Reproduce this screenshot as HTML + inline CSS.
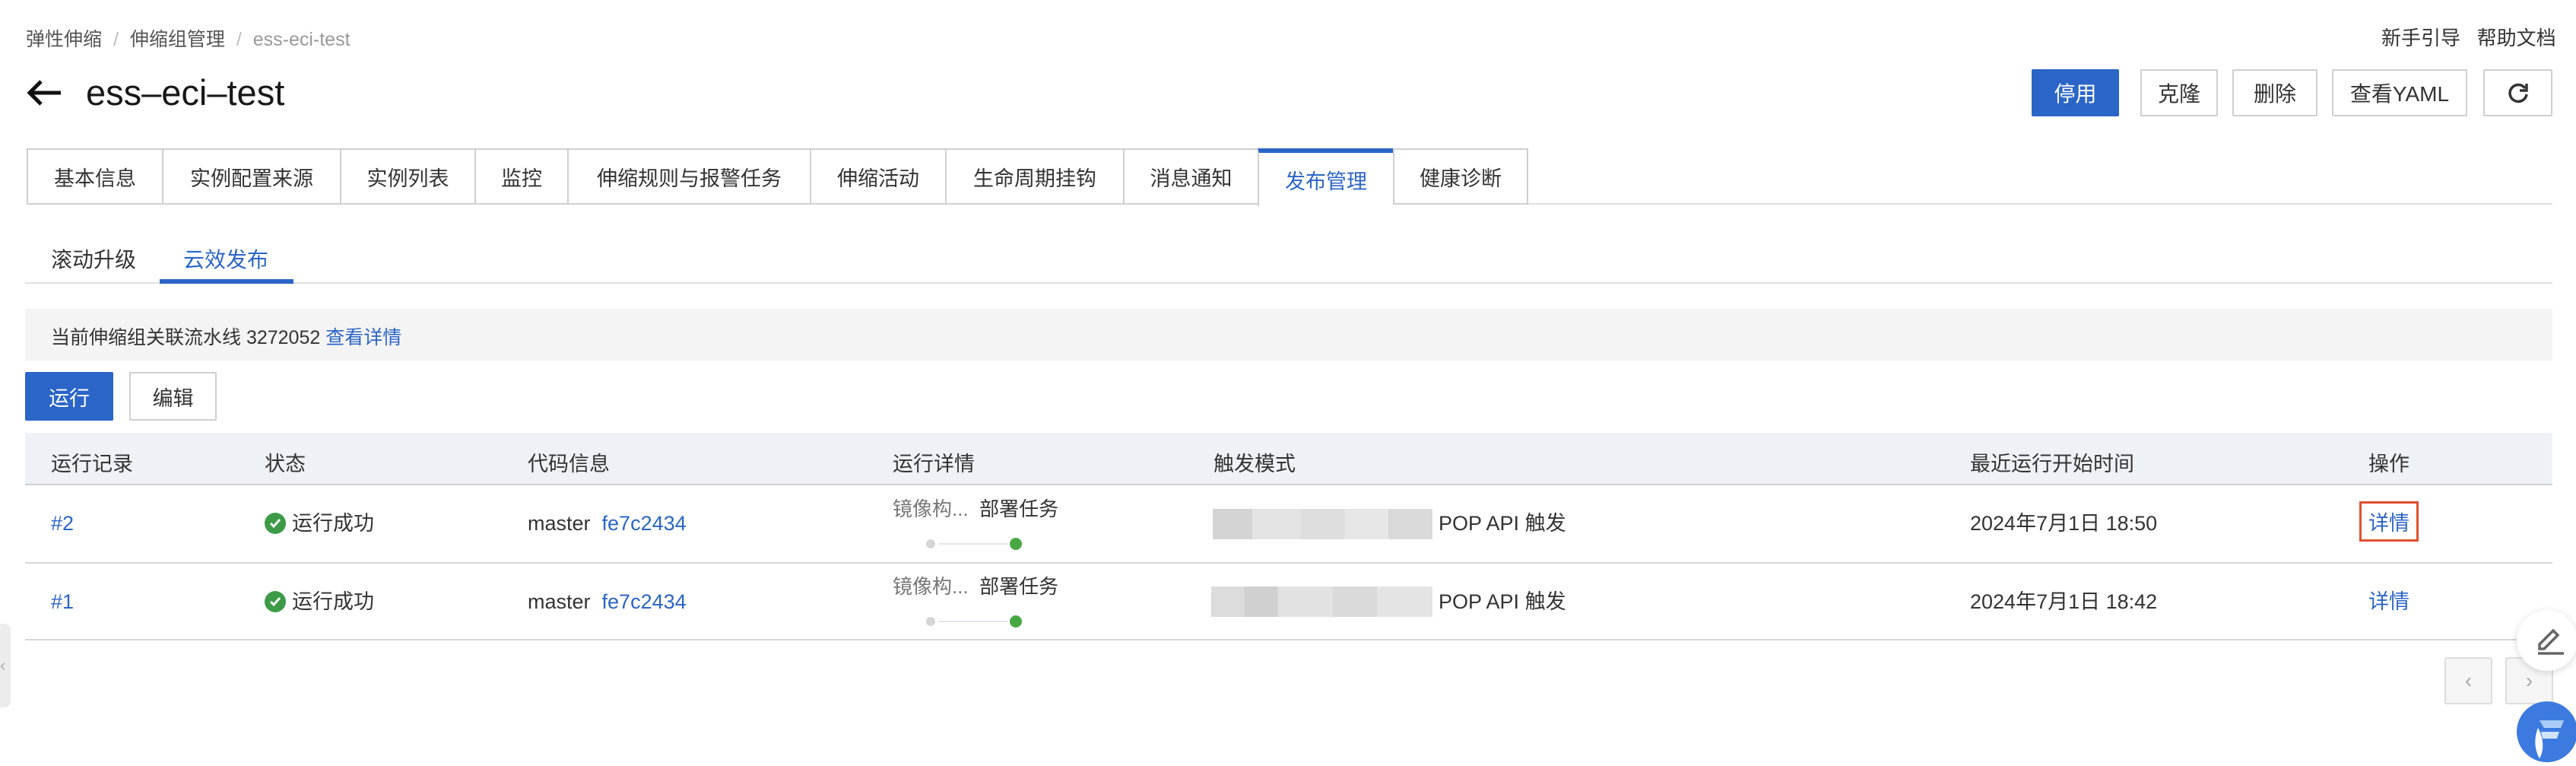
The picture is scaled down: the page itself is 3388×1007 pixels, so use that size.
<!DOCTYPE html>
<html><head><meta charset="utf-8"><style>
*{margin:0;padding:0;box-sizing:border-box}
body{width:3388px;height:996px;background:#fff;position:relative;overflow:hidden;font-family:"Liberation Sans","Noto Sans CJK SC",sans-serif;color:#333}
.a{position:absolute;white-space:nowrap}
.btn{position:absolute;top:91px;height:62px;border:2px solid #cfcfcf;background:#fff;font-size:28px;display:flex;align-items:center;justify-content:center;color:#333;border-radius:2px}
.tab{position:absolute;top:195px;height:74px;border:2px solid #cfcfcf;border-right:none;font-size:27px;display:flex;align-items:center;justify-content:center;color:#333;background:#fff}
.th{position:absolute;top:588px;font-size:27px;color:#333}
.td{position:absolute;font-size:27px;color:#333;line-height:34px}
.blue,.td.blue{color:#2b65c8}
</style></head><body>
<div class="a" style="left:34px;top:32px;font-size:25px;color:#555">弹性伸缩 <span style="color:#bbb;margin:0 8px">/</span> 伸缩组管理 <span style="color:#bbb;margin:0 8px">/</span> <span style="color:#999">ess-eci-test</span></div>
<div class="a" style="left:3132px;top:30px;font-size:26px;color:#333">新手引导&nbsp;&nbsp;&nbsp;帮助文档</div>
<svg class="a" style="left:34px;top:103px" width="48" height="38" viewBox="0 0 48 38"><path d="M46 19H6M20 4 5 19l15 15" fill="none" stroke="#111" stroke-width="5"/></svg>
<div class="a" style="left:113px;top:94px;font-size:47px;color:#181818">ess–eci–test</div>
<div class="btn" style="left:2672px;width:115px;background:#2b65c8;border-color:#2b65c8;color:#fff">停用</div>
<div class="btn" style="left:2815px;width:102px">克隆</div>
<div class="btn" style="left:2936px;width:112px">删除</div>
<div class="btn" style="left:3067px;width:178px">查看YAML</div>
<div class="btn" style="left:3266px;width:91px"><svg width="30" height="30" viewBox="0 0 30 30"><path d="M24 9A11 11 0 1 0 26 17" fill="none" stroke="#333" stroke-width="3.5"/><path d="M26 3v9h-9" fill="none" stroke="#333" stroke-width="3.5"/></svg></div>
<div class="a" style="left:35px;top:267px;width:3322px;height:2px;background:#e0e0e0"></div>
<div class="tab" style="left:35px;width:178px">基本信息</div>
<div class="tab" style="left:213px;width:234px">实例配置来源</div>
<div class="tab" style="left:447px;width:177px">实例列表</div>
<div class="tab" style="left:624px;width:122px">监控</div>
<div class="tab" style="left:746px;width:319px">伸缩规则与报警任务</div>
<div class="tab" style="left:1065px;width:178px">伸缩活动</div>
<div class="tab" style="left:1243px;width:234px">生命周期挂钩</div>
<div class="tab" style="left:1477px;width:177px">消息通知</div>
<div class="tab" style="left:1654px;width:178px;border-top:6px solid #2b65c8;border-bottom:none;height:76px;color:#2b65c8">发布管理</div>
<div class="tab" style="left:1832px;width:178px;border-right:2px solid #cfcfcf">健康诊断</div>
<div class="a" style="left:67px;top:320px;font-size:28px;color:#333">滚动升级</div>
<div class="a" style="left:241px;top:320px;font-size:28px;color:#2b65c8">云效发布</div>
<div class="a" style="left:33px;top:371px;width:3324px;height:2px;background:#e0e0e0"></div>
<div class="a" style="left:210px;top:367px;width:176px;height:6px;background:#2b65c8"></div>
<div class="a" style="left:33px;top:406px;width:3324px;height:68px;background:#f4f4f4"></div>
<div class="a" style="left:67px;top:424px;font-size:25px;color:#333">当前伸缩组关联流水线 3272052 <span class="blue">查看详情</span></div>
<div class="a" style="left:33px;top:489px;width:116px;height:64px;background:#2b65c8;border-radius:2px;color:#fff;font-size:27px;display:flex;align-items:center;justify-content:center">运行</div>
<div class="a" style="left:170px;top:489px;width:115px;height:64px;border:2px solid #cfcfcf;border-radius:2px;font-size:27px;display:flex;align-items:center;justify-content:center">编辑</div>
<div class="a" style="left:33px;top:569px;width:3324px;height:69px;background:#eef1f6;border-bottom:2px solid #cfcfcf"></div>
<div class="th" style="left:67px">运行记录</div><div class="th" style="left:348px">状态</div><div class="th" style="left:694px">代码信息</div><div class="th" style="left:1174px">运行详情</div><div class="th" style="left:1596px">触发模式</div><div class="th" style="left:2591px">最近运行开始时间</div><div class="th" style="left:3115px">操作</div>
<div class="a" style="left:33px;top:739px;width:3324px;height:2px;background:#d6d6d6"></div>
<div class="a" style="left:33px;top:840px;width:3324px;height:2px;background:#d6d6d6"></div>
<!-- row1 -->
<div class="td blue" style="left:67px;top:671px">#2</div>
<div class="td" style="left:348px;top:671px"><svg width="28" height="28" viewBox="0 0 28 28" style="vertical-align:-5px;margin-right:8px"><circle cx="14" cy="14" r="14" fill="#3d9b47"/><path d="M8 14l4 4 8-9" fill="none" stroke="#fff" stroke-width="3"/></svg>运行成功</div>
<div class="td" style="left:694px;top:671px">master&nbsp;&nbsp;<span class="blue">fe7c2434</span></div>
<div class="td" style="left:1174px;top:652px;font-size:26px"><span style="color:#777">镜像构...</span>&nbsp;&nbsp;部署任务</div>
<div class="a" style="left:1218px;top:709px;width:12px;height:12px;border-radius:50%;background:#d5d5d5"></div>
<div class="a" style="left:1234px;top:714px;width:92px;height:2px;background:#e3e7ee"></div>
<div class="a" style="left:1328px;top:707px;width:16px;height:16px;border-radius:50%;background:#4aa844"></div>
<div class="a" style="left:1595px;top:669px;width:289px;height:40px;background:linear-gradient(90deg,#d4d4d4 0 18%,#e4e4e4 18% 40%,#dedede 40% 60%,#e6e6e6 60% 80%,#dadada 80%)"></div>
<div class="td" style="left:1892px;top:671px">POP API 触发</div>
<div class="td" style="left:2591px;top:671px">2024年7月1日 18:50</div>
<div class="a" style="left:3103px;top:659px;width:78px;height:53px;border:3px solid #e0502e"></div>
<div class="td blue" style="left:3115px;top:671px">详情</div>
<!-- row2 -->
<div class="td blue" style="left:67px;top:774px">#1</div>
<div class="td" style="left:348px;top:774px"><svg width="28" height="28" viewBox="0 0 28 28" style="vertical-align:-5px;margin-right:8px"><circle cx="14" cy="14" r="14" fill="#3d9b47"/><path d="M8 14l4 4 8-9" fill="none" stroke="#fff" stroke-width="3"/></svg>运行成功</div>
<div class="td" style="left:694px;top:774px">master&nbsp;&nbsp;<span class="blue">fe7c2434</span></div>
<div class="td" style="left:1174px;top:754px;font-size:26px"><span style="color:#777">镜像构...</span>&nbsp;&nbsp;部署任务</div>
<div class="a" style="left:1218px;top:811px;width:12px;height:12px;border-radius:50%;background:#d5d5d5"></div>
<div class="a" style="left:1234px;top:816px;width:92px;height:2px;background:#e3e7ee"></div>
<div class="a" style="left:1328px;top:809px;width:16px;height:16px;border-radius:50%;background:#4aa844"></div>
<div class="a" style="left:1593px;top:771px;width:291px;height:40px;background:linear-gradient(90deg,#dcdcdc 0 15%,#d0d0d0 15% 30%,#e2e2e2 30% 55%,#dadada 55% 75%,#e4e4e4 75%)"></div>
<div class="td" style="left:1892px;top:774px">POP API 触发</div>
<div class="td" style="left:2591px;top:774px">2024年7月1日 18:42</div>
<div class="td blue" style="left:3115px;top:774px">详情</div>
<!-- pagination -->
<div class="a" style="left:3215px;top:864px;width:63px;height:62px;border:2px solid #ddd;border-radius:3px;background:#f5f5f5;color:#aaa;font-size:28px;display:flex;align-items:center;justify-content:center">‹</div>
<div class="a" style="left:3295px;top:864px;width:63px;height:62px;border:2px solid #ddd;border-radius:3px;background:#f5f5f5;color:#aaa;font-size:28px;display:flex;align-items:center;justify-content:center">›</div>
<div class="a" style="left:3310px;top:802px;width:80px;height:80px;border-radius:50%;background:#fff;box-shadow:0 2px 10px rgba(0,0,0,.15)"><svg width="80" height="80" viewBox="0 0 80 80"><path d="M30 45l18-18 6 6-18 18h-6z" fill="none" stroke="#666" stroke-width="3.5"/><path d="M28 57h34" stroke="#666" stroke-width="3.5"/></svg></div>
<div class="a" style="left:3310px;top:922px;width:80px;height:80px;border-radius:50%;background:#3c7ae0"><svg width="80" height="80" viewBox="0 0 80 80"><path d="M30 25h32l-4 10H36z" fill="#a9cdf8"/><path d="M32 40h24l-3 9H34z" fill="#cfe3fb"/><path d="M28 35c-6 15-4 30 2 40 6-10 6-25-2-40z" fill="#fff"/></svg></div>
<div class="a" style="left:0;top:820px;width:14px;height:110px;background:#ececec;border-radius:0 8px 8px 0;color:#aaa;font-size:22px;line-height:110px">‹</div>
</body></html>
